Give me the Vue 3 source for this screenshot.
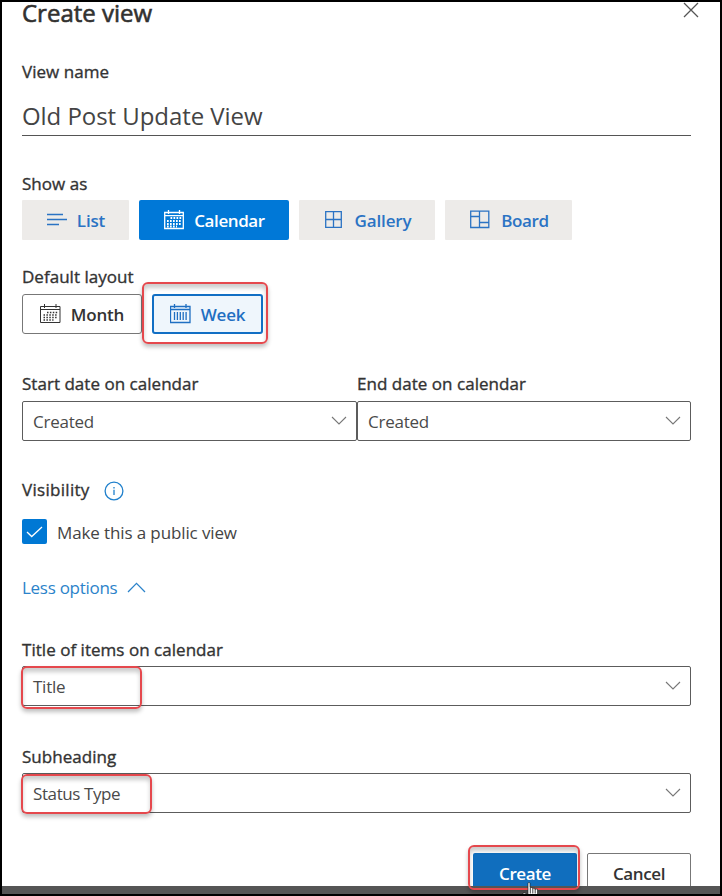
<script setup>
import { ref } from 'vue'

const viewName = ref('Old Post Update View')
const kinds = ['List', 'Calendar', 'Gallery', 'Board']
const active = ref('Calendar')
</script>

<template>
  <div class="frame">
    <main class="panel">
      <header class="head">
        <h1><span>Create view</span></h1>
        <svg class="close" width="16" height="16" viewBox="0 0 16 16"><path d="M1 1l14 14M15 1L1 15" /></svg>
      </header>

      <div class="label name-label"><span>View name</span></div>
      <div class="name-field"><span>{{ viewName }}</span></div>

      <div class="label show-label"><span>Show as</span></div>
      <div class="row kinds">
        <button v-for="k in kinds" :key="k" class="kind" :class="[k.toLowerCase(), { active: k === active }]" @click="active = k">
          <svg v-if="k === 'List'" width="20" height="20" viewBox="0 0 20 20"><path d="M0 4.5h16M0 9.5h20M0 14.5h12" /></svg>
          <svg v-else-if="k === 'Calendar'" width="20" height="20" viewBox="0 0 20 20">
            <path d="M.7 2.5h18.6v16H.7zM.7 5.7h18.6M4.5 0v4M15.5 0v4" />
            <path class="dots" d="M6.5 8h11M3 11h14M3 14h14M3 16.5h10" />
          </svg>
          <svg v-else-if="k === 'Gallery'" width="17" height="17" viewBox="0 0 17 17"><path d="M.7.7h15.6v15.6H.7zM8.5.7v15.6M.7 8.5h15.6" /></svg>
          <svg v-else width="20" height="19" viewBox="0 0 20 19"><path d="M.7 1.2h18.1v16.3H.7zM9.5 1.2v16.3M.7 6.5h8.8M9.5 12.5h9.3" /></svg>
          <span>{{ k }}</span>
        </button>
      </div>

      <div class="label layout-label"><span>Default layout</span></div>
      <div class="row layouts">
        <button class="layout month">
          <svg width="21" height="20" viewBox="0 0 21 20">
            <path d="M.5 2.5h19.5v16H.5zM.5 5.5h19.5M4.5 0v4M16 0v4" />
            <path class="dots" d="M7 8.5h11M3.5 11h14M3.5 13.5h14M3.5 16h10" />
          </svg>
          <span>Month</span>
        </button>
        <button class="layout week">
          <svg width="21" height="20" viewBox="0 0 21 20">
            <path d="M.5 2.5h19.5v16H.5zM.5 5.5h19.5M4.5 0v4M16 0v4M4.5 8v8M7.4 8v8M10.3 8v8M13.2 8v8M16.1 8v8" />
          </svg>
          <span>Week</span>
          <i class="mark mark-week"></i>
        </button>
      </div>

      <div class="row dates">
        <div class="date">
          <div class="label"><span>Start date on calendar</span></div>
          <div class="select"><span>Created</span><svg width="16" height="9" viewBox="0 0 16 9"><path d="M1 1l7 7 7-7" /></svg></div>
        </div>
        <div class="date end">
          <div class="label"><span>End date on calendar</span></div>
          <div class="select"><span>Created</span><svg width="16" height="9" viewBox="0 0 16 9"><path d="M1 1l7 7 7-7" /></svg></div>
        </div>
      </div>

      <div class="label visibility">
        <span>Visibility</span>
        <svg width="20" height="20" viewBox="0 0 20 20"><circle cx="10" cy="10" r="8.9" /><path d="M10 8.7v5.3M10 6v1.4" /></svg>
      </div>
      <div class="check">
        <span class="box"><svg width="17" height="12" viewBox="0 0 17 12"><path d="M1 6l4.7 4.5L16 1" /></svg></span>
        <span class="public">Make this a public view</span>
      </div>

      <div class="less">
        <span>Less options</span>
        <svg width="19" height="11" viewBox="0 0 19 11"><path d="M1 10l8.5-8.6L18 10" /></svg>
      </div>

      <div class="label title-label"><span>Title of items on calendar</span></div>
      <div class="select">
        <span>Title</span><svg width="16" height="9" viewBox="0 0 16 9"><path d="M1 1l7 7 7-7" /></svg>
        <i class="mark mark-title"></i>
      </div>

      <div class="label sub-label"><span>Subheading</span></div>
      <div class="select status">
        <span>Status Type</span><svg width="16" height="9" viewBox="0 0 16 9"><path d="M1 1l7 7 7-7" /></svg>
        <i class="mark mark-status"></i>
      </div>

      <footer class="actions">
        <button class="create"><span>Create</span></button>
        <button class="cancel"><span>Cancel</span></button>
      </footer>
    </main>
    <div class="scrollbar"></div>
    <i class="mark mark-create"></i>
    <svg class="cursor" width="20" height="16" viewBox="0 0 20 16">
      <path d="M6 13V1.5Q6 .5 7 .5T8 1.5V5.5h2.4v.8h2.4v.8h2.7V16H5l-4-3v-2h2l3 2z" />
      <path class="fingers" d="M8.3 6v5.5M10.8 6.5v5M13.2 7v4.5" />
    </svg>
  </div>
</template>

<style>
body { margin: 0; background: #fff; overflow: hidden; }
</style>

<style scoped>
* { box-sizing: border-box; }
.frame {
  position: relative;
  width: 722px;
  height: 896px;
  display: flex;
  flex-direction: column;
  overflow: hidden;
  border: 2px solid #000;
  background: #fff;
  color: #333;
  font-family: "Open Sans", "Noto Sans", sans-serif;
  font-size: 17px;
}
.panel { height: 884px; padding: 0 29px 0 20px; overflow: hidden; }
.scrollbar { height: 8px; background: #555; }
svg { flex: none; fill: none; stroke: currentColor; stroke-width: 1.3; }
span { white-space: nowrap; }
.head { height: 58px; display: flex; justify-content: space-between; }
h1 { margin: 0; font-size: 24px; font-weight: 400; -webkit-text-stroke: .6px #323130; line-height: 22px; color: #323130; }
.close { margin-right: -8px; color: #555; }
.label { height: 24px; line-height: 24px; font-weight: 400; color: #333; -webkit-text-stroke: .35px #333; letter-spacing: .03px; }
.name-field { height: 52px; line-height: 63px; border-bottom: 1px solid #555; font-size: 24px; font-weight: 400; letter-spacing: -.06px; color: #444; }
.show-label { margin-top: 36px; }
.row { display: flex; }
button { padding: 0; display: flex; align-items: center; justify-content: center; font: inherit; border: 0; }
.kinds { gap: 10px; margin-top: 4px; }
.kind { height: 40px; background: #edebe9; color: #2b73c4; font-weight: 600; border-radius: 1px; gap: 10px; letter-spacing: -.15px; }
.kind.active { background: #0078d7; color: #fff; border-radius: 2px; }
.list { width: 107px; padding-left: 1px; }
.calendar { width: 150px; padding-left: 1px; letter-spacing: -.4px; }
.gallery { width: 136px; gap: 13px; padding-left: 2px; }
.board { width: 127px; gap: 11px; padding-left: 2px; letter-spacing: -.4px; }
.kind svg { margin-top: -1px; }
.dots { stroke-width: 1.8; stroke-dasharray: 1.7 1.3; }
.layout-label { margin-top: 25px; }
.layouts { gap: 10px; margin-top: 5px; }
.layout { position: relative; height: 40px; background: #fff; border: 1px solid #777; border-radius: 3px; font-weight: 600; color: #333; gap: 10px; letter-spacing: -.2px; }
.layout span { padding-top: 1px; }
.month { width: 120px; }
.month svg { stroke-width: 1; }
.month .dots { stroke-width: 1.5; stroke-dasharray: 1.5 1.4; }
.week { width: 111px; border: 2px solid #126fc4; background: #eff6fc; color: #1f6fc2; }
.mark {
  position: absolute;
  border: 2px solid #e5484d;
  border-radius: 6px;
  box-shadow: 0 3px 4px rgba(0, 0, 0, .25), inset 0 4px 4px rgba(0, 0, 0, .2);
}
.mark-week { left: -12px; top: -14px; width: 126px; height: 62px; }
.dates { margin-top: 38px; }
.date { width: 335px; }
.date.end { width: 334px; }
.date .label { margin-bottom: 5px; }
.select {
  position: relative;
  height: 40px;
  display: flex;
  align-items: center;
  justify-content: space-between;
  padding: 0 9px 0 10px;
  border: 1px solid #5c5c5c;
  border-radius: 2px;
  font-weight: 400;
  letter-spacing: -.25px;
  color: #4a4a4a;
}
.status { letter-spacing: -.4px; }
.select svg { color: #777; stroke-width: 1.1; margin-top: -2px; }
.visibility { margin-top: 37px; display: flex; align-items: center; gap: 14px; letter-spacing: .3px; }
.visibility svg { color: #2080cc; stroke-width: 1.3; margin-top: 2px; }
.check { margin-top: 17px; height: 25px; display: flex; align-items: center; gap: 10px; color: #444; }
.public { letter-spacing: -.12px; padding-top: 1px; }
.box { width: 25px; height: 25px; display: flex; align-items: center; justify-content: center; background: #0078d4; color: #fff; border-radius: 2px; }
.less { height: 24px; margin-top: 31px; display: flex; align-items: center; gap: 10px; letter-spacing: -.28px; color: #2b83ca; }
.title-label { margin-top: 39px; margin-bottom: 4px; }
.sub-label { margin-top: 39px; margin-bottom: 4px; }
.mark-title { left: -2px; top: -1px; width: 121px; height: 43px; }
.mark-status { left: -2px; top: 0; width: 131px; height: 40px; }
.actions { display: flex; justify-content: flex-end; gap: 10px; margin-top: 40px; }
.actions button { width: 104px; height: 40px; font-weight: 600; border-radius: 2px; letter-spacing: -.4px; }
.create { background: #106ebe; color: #fff; }
.cancel { background: #fff; color: #333; border: 1px solid #777; }
.mark-create { left: 466px; top: 843px; width: 112px; height: 45px; }
.cursor { position: absolute; left: 520px; top: 880px; fill: #fff; stroke: #111; stroke-width: .6; }
.fingers { stroke: #111; stroke-width: .8; }
</style>
